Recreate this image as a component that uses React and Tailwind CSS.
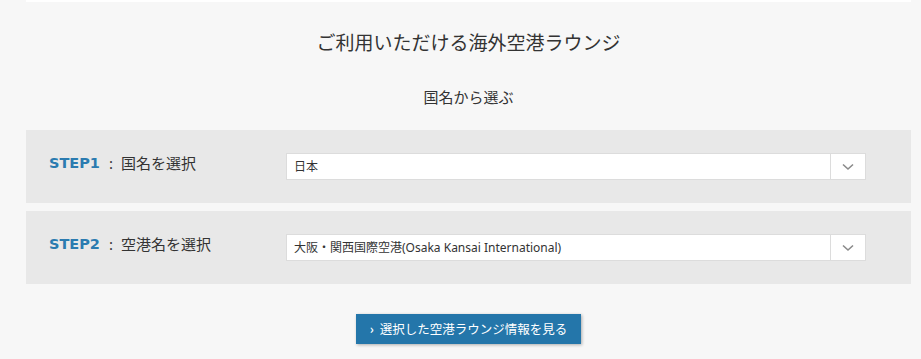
export default function App() {
  const font = { fontFamily: '"Noto Sans CJK JP", "Noto Sans", sans-serif' };
  const Chevron = () => (
    <svg width="12" height="8" viewBox="0 0 12 8" fill="none">
      <path d="M1 1.5 L6 6 L11 1.5" stroke="#8a8a8a" strokeWidth="1.6" />
    </svg>
  );
  const Row = ({ step, label, value }) => (
    <div className="flex h-[73px] items-center bg-[#e8e8e8] pl-[23px] pr-[45px]">
      <div className="flex w-[237px] items-center -mt-[6px]">
        <span className="text-[14.5px] font-bold text-[#2b7bb0]" style={{ fontFamily: '"DejaVu Sans", sans-serif' }}>{step}</span>
        <span className="ml-[9px] text-[15px] text-[#333]" style={{ fontFamily: '"Noto Sans", sans-serif' }}>:</span>
        <span className="ml-[8px] text-[15px] text-[#333]">{label}</span>
      </div>
      <div className="flex h-[27px] flex-1 items-center border border-[#dcdcdc] bg-white">
        <span className="flex-1 pl-[7px] text-[12px] text-[#333]" style={{ fontFamily: '"Noto Sans", "Noto Sans CJK JP", sans-serif' }}>{value}</span>
        <span className="flex h-full w-[35px] items-center justify-center border-l border-[#dcdcdc]">
          <Chevron />
        </span>
      </div>
    </div>
  );
  return (
    <div className="h-[359px] w-[921px] overflow-hidden bg-[#f7f7f7]" style={font}>
      <div className="ml-[26px] mr-[10px]">
        <div className="h-[2px] bg-white" />
        <div className="pt-[26px] text-center text-[19px] leading-[28px] text-[#333]">ご利用いただける海外空港ラウンジ</div>
        <div className="pt-[30px] text-center text-[15px] leading-[22px] text-[#333]">国名から選ぶ</div>
        <div className="mt-[22px] flex flex-col gap-[8px]">
          <Row step="STEP1" label="国名を選択" value="日本" />
          <Row step="STEP2" label="空港名を選択" value="大阪・関西国際空港(Osaka Kansai International)" />
        </div>
        <div className="mt-[30px] flex justify-center">
          <button className="flex h-[30px] w-[225px] items-center justify-center bg-[#2476aa] text-[12.5px] text-white shadow-[1px_1px_3px_rgba(0,0,0,0.3)]">
            <span className="mr-[6px] font-bold">›</span>選択した空港ラウンジ情報を見る
          </button>
        </div>
      </div>
    </div>
  );
}
